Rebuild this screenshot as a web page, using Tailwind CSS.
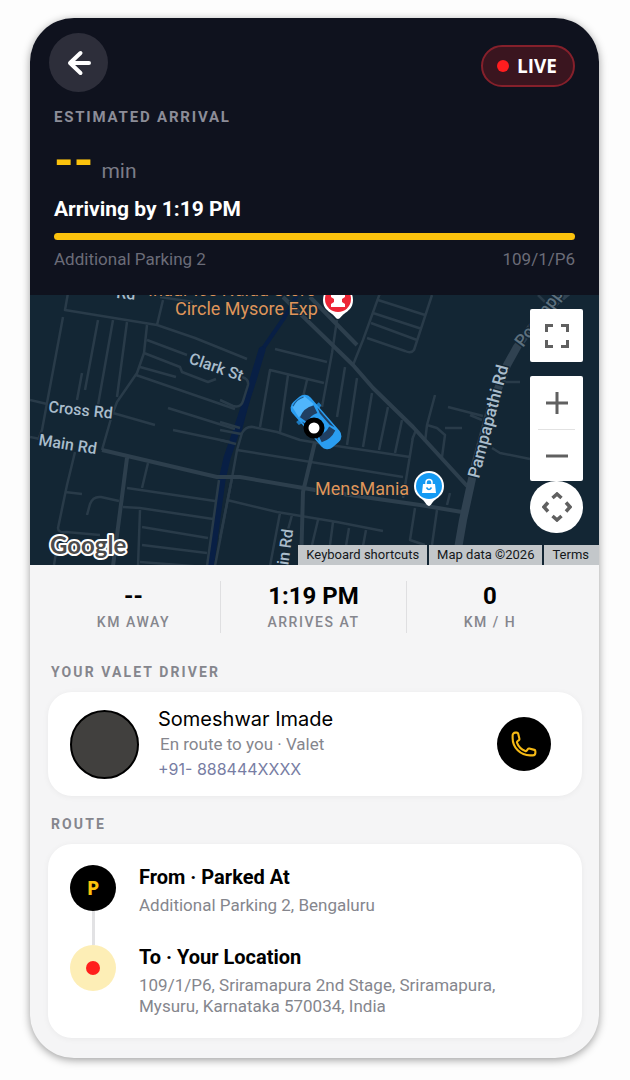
<!DOCTYPE html>
<html lang="en">
<head>
<meta charset="utf-8">
<meta name="viewport" content="width=device-width, initial-scale=1">
<title>Valet tracking</title>
<script src="https://cdn.jsdelivr.net/npm/@tailwindcss/browser@4"></script>
</head>
<body class="min-h-screen bg-[#fdfdfd] pt-[18px] pr-[31px] pb-[22px] pl-[30px] font-['Roboto',sans-serif] text-black">
<main class="overflow-hidden rounded-[44px] bg-[#f5f5f6] shadow-[0_2px_9px_rgba(0,0,0,0.38)]">

  <header class="bg-[#0f121e] pt-[15px] pb-6">
    <div class="flex items-start justify-between pr-6 pl-[19px]">
      <button type="button" aria-label="Back" class="flex size-[59px] items-center justify-center rounded-full bg-[#2d2e3a]">
        <svg class="size-7" viewBox="0 0 28 28" fill="none" stroke="#fff" stroke-width="4" stroke-linecap="round" stroke-linejoin="round"><path d="M15.500 4 5 14l10.500 10M5.500 14H24"/></svg>
      </button>
      <div class="mt-3 flex h-[42px] items-center gap-2 rounded-full border-2 border-[#85202b] bg-[#3a151f] pr-4 pl-[14px] font-['Open_Sans',sans-serif] text-[19px] font-bold text-white">
        <span class="size-3 rounded-full bg-[#ff1d1f]"></span>LIVE
      </div>
    </div>
    <div class="px-6 pt-[13px]">
      <h1 class="text-[15px] leading-6 font-bold tracking-[0.12em] text-[#8c8d98]">ESTIMATED ARRIVAL</h1>
      <p class="flex h-[66px] items-baseline gap-2 text-[50px] leading-[64px] font-bold text-[#fbc20d]">--<span class="text-[21px] font-normal text-[#7b7c88]">min</span></p>
      <p class="text-[21px] leading-7 font-bold text-white">Arriving by 1:19 PM</p>
      <div role="progressbar" aria-label="Trip progress" aria-valuenow="100" class="mt-[10px] h-[7px] rounded-full bg-[#fbc20d]"></div>
      <div class="mt-[7px] flex justify-between text-[17px] leading-6 text-[#6b6c78]"><span>Additional Parking 2</span><span>109/1/P6</span></div>
    </div>
  </header>

  <section aria-label="Map" class="relative h-[270px] overflow-hidden bg-[#132634]">
    <svg class="block h-full w-full" viewBox="30 295 569 270" preserveAspectRatio="xMidYMid slice" font-family="Roboto, sans-serif">
      <!-- River -->
      <g fill="none" stroke="#081f45" stroke-linecap="round" stroke-linejoin="round">
        <path stroke-width="4" d="M300 290 284 318 262 350 253 380 240 430"/>
        <path stroke-width="7" d="M262 350 253 380 240 420 227 458 222 480 210 570"/>
      </g>
      <!-- Side streets -->
      <g fill="none" stroke="#293b49" stroke-width="2.500" stroke-linejoin="round">
        <path d="M68 293 65 310 157 325 195 338 247 359M163 300 157 325M63 317 42 430 38 440M98 320 85 390M113 320 98 405M127 322 117 397M147 325 144 353 137 373 117 402 112 415 102 450M147 340 187 355M144 353 180 367 182 372 208 382 216 379M140 367 176 377M136 375 235 409M168 408 235 429M113 413 155 425M30 400 47 404M82 373 77 400"/>
        <path d="M275 349 327 362M324 383 270 370 260 427M288 375 280 432M307 380 303 397M337 320 332 353 322 407M380 293 363 340 353 365M378 300 425 315M373 313 422 329M371 323 417 340M367 338 405 351Q411 354 414 350L432 295M345 367 337 417M357 378 347 445M372 393 363 447M388 407 379 450M402 420 395 453M220 400 233 406Q241 408 243 401L248 385Q249 379 242 377M220 422 240 428M160 297 193 302"/>
        <path d="M75 452 67 485 58 528Q58 533 66 532L100 535M65 492 82 494M58 540 54 565M148 463 142 488M127 488 215 501M123 507 140 508 213 519M140 510 138 566M142 527 208 538M142 545 207 553M140 562 205 567M119 501 101 497Q93 496 90 504L87 515M173 430 230 442M219 480 207 566M232 478 215 566M30 437 45 440"/>
        <path d="M220 538 232 478 237 450 242 433Q246 426 253 427L277 432 300 440 330 445 410 457M237 450 403 477M220 430 241 434M220 440 236 444M227 500 277 512 337 522 383 531M280 513 270 566M292 515 286 537M318 520 312 545M333 522 330 545M349 528 346 546M366 530 363 546M413 437 403 498M415 508 410 540 425 545M437 510 432 545M416 430 412 440"/>
        <path d="M435 395 427 425 425 442M427 425 437 428 445 435 442 457M445 428H462M448 407 483 416M450 493 447 505M492 448 500 453 530 459M505 382H520M538 295 550 307M482 420 470 415"/>
      </g>
      <g fill="none" stroke="#2d3f4d" stroke-width="4" stroke-linejoin="round">
        <path d="M283 297 353 365 373 388 413 427 468 487M310 297 357 345"/>
        <path d="M102 450 153 462 217 477H240L315 490 420 505 462 512M127 458 113 566M315 442 303 492 301 566"/>
        <path stroke-width="8" stroke="#304251" d="M570 290 540 315 517 347 507 365 490 410 475 465 463 520 455 566"/>
      </g>
      <!-- Street names -->
      <g fill="#a9bccb" stroke="#132634" stroke-width="3" paint-order="stroke" font-size="16" font-weight="500" stroke-linejoin="round">
        <text x="116" y="298" transform="rotate(5 116 298)">Rd</text>
        <text x="188" y="363" transform="rotate(19 188 363)">Clark St</text>
        <text x="48" y="412" transform="rotate(6 48 412)">Cross Rd</text>
        <text x="38" y="445" transform="rotate(9 38 445)">Main Rd</text>
        <text x="285" y="588" transform="rotate(-82 285 588)">Main Rd</text>
        <path id="road-pampapathi" fill="none" stroke="none" d="M479 479Q494 420 511 358"/>
        <text font-size="17"><textPath href="#road-pampapathi">Pampapathi Rd</textPath></text>
        <text x="523" y="348" font-size="17" fill="#5d707e" transform="rotate(-53 523 348)">Poonappa Rd</text>
      </g>
      <!-- Places -->
      <g fill="#df955a" stroke="#132634" stroke-width="2" paint-order="stroke" font-size="18">
        <text x="148" y="296">Indur Ice Naidu Store</text>
        <text x="175" y="315">Circle Mysore Exp</text>
        <text x="315" y="495">MensMania</text>
      </g>
      <path fill="#fff" d="M338 285a15 15 0 0 1 15 15c0 8-5 11-9 14-3 2-4 5-6 5s-3-3-6-5c-4-3-9-6-9-14a15 15 0 0 1 15-15z"/>
      <circle cx="338" cy="299" r="13" fill="#ed2535"/>
      <path fill="#fff" d="M331 294h14v3l-3 2v3l3 2v3h-14v-3l3-2v-3l-3-2z"/>
      <path fill="#fff" d="M429 471a15 15 0 0 1 15 15c0 8-5 11-9 14-3 2-4 6-6 6s-4-4-6-6c-4-3-9-6-9-14a15 15 0 0 1 15-15z"/>
      <circle cx="429" cy="486" r="13" fill="#149af3"/>
      <path fill="#fff" d="M423 484h12l1 9h-14z"/>
      <path fill="none" stroke="#fff" stroke-width="1.500" d="M426 485v-2.500a3 3 0 0 1 6 0v2.500"/>
      <path fill="none" stroke="#149af3" stroke-width="1.500" d="M426.500 487.500q2.500 4 5 0"/>
      <!-- Valet car, nose to the upper left -->
      <g transform="translate(316 422) rotate(49)">
        <path fill="#1d79bd" d="M-13-15h4l1 4h-5zM-13 15h4l1-4h-5z"/>
        <rect x="-30" y="-12" width="60" height="24" rx="8" fill="#2a9df0"/>
        <path fill="#50b5fb" d="M-27-8q-3 8 0 16l12 2v-20z"/>
        <path fill="#203f62" d="M-14-9q-5 9 0 18l8-2q-3-7 0-14z"/>
        <path fill="#203f62" d="M-10-10.500h26l-5 2h-15zM-10 10.500h26l-5-2h-15z"/>
        <path fill="#203f62" d="M12-7q3 7 0 14l7 2q4-9 0-18z"/>
        <path fill="none" stroke="#1b5b91" d="M-27-7q-3 7 0 14"/>
      </g>
      <circle cx="314" cy="428" r="8" fill="#fff" stroke="#000" stroke-width="5"/>
      <text x="50" y="554" font-family="Lato, sans-serif" font-size="24" font-weight="700" fill="#4b4b4b" stroke="#fff" stroke-width="4" stroke-linejoin="round" paint-order="stroke">Google</text>
    </svg>

    <div class="absolute top-[14px] right-4 flex w-[53px] flex-col">
      <button type="button" aria-label="Toggle fullscreen" class="mb-[14px] flex h-[53px] items-center justify-center rounded-xs bg-white">
        <svg class="size-6" viewBox="0 0 24 24" fill="none" stroke="#606060" stroke-width="3"><path d="M1.500 8V1.500H8M16 1.500h6.500V8M22.500 16v6.500H16M8 22.500H1.500V16"/></svg>
      </button>
      <button type="button" aria-label="Zoom in" class="flex h-[53px] items-center justify-center rounded-t-xs bg-white">
        <svg class="size-6" viewBox="0 0 24 24" stroke="#606060" stroke-width="3"><path d="M12 1v22M1 12h22"/></svg>
      </button>
      <div class="bg-white px-2"><div class="h-px bg-[#e2e2e2]"></div></div>
      <button type="button" aria-label="Zoom out" class="flex h-[51px] items-center justify-center rounded-b-xs bg-white">
        <svg class="size-6" viewBox="0 0 24 24" stroke="#606060" stroke-width="3"><path d="M1 12h22"/></svg>
      </button>
      <button type="button" aria-label="Map camera controls" class="flex h-[52px] items-center justify-center rounded-full bg-white">
        <svg class="size-[30px]" viewBox="0 0 30 30" fill="none" stroke="#606060" stroke-width="3.500"><path d="m10.500 6 4.500-4 4.500 4M10.500 24l4.500 4 4.500-4M6 10.500 2 15l4 4.500M24 10.500l4 4.500-4 4.500"/></svg>
      </button>
    </div>

    <div class="absolute right-0 bottom-0 flex gap-0.5 text-[13px] leading-5 text-[#14171a]">
      <button type="button" class="bg-[#c3c7ca] px-2">Keyboard shortcuts</button>
      <span class="bg-[#c3c7ca] px-2">Map data ©2026</span>
      <a href="#terms" class="bg-[#c3c7ca] pr-[10px] pl-2">Terms</a>
    </div>
  </section>

  <section aria-label="Trip figures" class="grid grid-cols-[174fr_186fr_166fr] pt-4 pr-[26px] pl-[17px] text-center">
    <div class="border-r border-[#dfdfe1]">
      <p class="text-2xl leading-[30px] font-bold">--</p>
      <p class="text-sm leading-[22px] font-medium tracking-[0.11em] text-[#85868d]">KM AWAY</p>
    </div>
    <div class="border-r border-[#dfdfe1]">
      <p class="text-2xl leading-[30px] font-bold">1:19 PM</p>
      <p class="text-sm leading-[22px] font-medium tracking-[0.11em] text-[#85868d]">ARRIVES AT</p>
    </div>
    <div>
      <p class="text-2xl leading-[30px] font-bold">0</p>
      <p class="text-sm leading-[22px] font-medium tracking-[0.11em] text-[#85868d]">KM / H</p>
    </div>
  </section>

  <section class="pt-[27px] pr-[17px] pl-[18px]">
    <h2 class="pl-[3px] text-sm leading-6 font-bold tracking-[0.15em] text-[#85868d]">YOUR VALET DRIVER</h2>
    <div class="mt-2 flex items-center gap-[19px] rounded-[24px] bg-white py-[15px] pr-[31px] pl-[22px] shadow-[0_1px_6px_rgba(0,0,0,0.05)]">
      <div class="size-[69px] shrink-0 rounded-full border-2 border-black bg-[#41403e]"></div>
      <div class="min-w-0 flex-1">
        <p class="font-['Inter',sans-serif] text-xl leading-6">Someshwar Imade</p>
        <p class="pl-0.5 text-[17px] leading-[26px] text-[#85868d]">En route to you · Valet</p>
        <a href="tel:+91888444" class="block font-['Inter',sans-serif] text-base leading-6 text-[#777da3]">+91- 888444XXXX</a>
      </div>
      <button type="button" aria-label="Call driver" class="flex size-[54px] items-center justify-center rounded-full bg-black">
        <svg class="size-7" viewBox="0 0 24 24" fill="none" stroke="#f5b915" stroke-width="1.800" stroke-linejoin="round"><path d="M2.250 6.750c0 8.284 6.716 15 15 15h2.250a2.250 2.250 0 0 0 2.250-2.250v-1.372c0-.516-.351-.966-.852-1.091l-4.423-1.106c-.44-.11-.902.055-1.173.417l-.97 1.293c-.282.376-.769.542-1.210.38a12.035 12.035 0 0 1-7.143-7.143c-.162-.441.004-.928.380-1.210l1.293-.970c.363-.271.527-.734.417-1.173L6.963 3.102a1.125 1.125 0 0 0-1.091-.852H4.500A2.250 2.250 0 0 0 2.250 4.500v2.250z"/></svg>
      </button>
    </div>
  </section>

  <section class="pt-4 pr-[17px] pb-5 pl-[18px]">
    <h2 class="pl-[3px] text-sm leading-6 font-bold tracking-[0.15em] text-[#85868d]">ROUTE</h2>
    <ol class="mt-2 rounded-[24px] bg-white px-[22px] pt-[21px] pb-[21px] shadow-[0_1px_6px_rgba(0,0,0,0.05)]">
      <li class="flex gap-[23px]">
        <div class="flex flex-col items-center">
          <span class="flex size-[46px] items-center justify-center rounded-full bg-black font-['Open_Sans',sans-serif] text-xl font-bold text-[#fbc20d]">P</span>
          <span class="h-[34px] w-[3px] bg-[#e2e2e4]"></span>
        </div>
        <div>
          <h3 class="text-xl leading-6 font-bold">From · Parked At</h3>
          <p class="mt-[6px] text-[17px] leading-[21px] text-[#85868d]">Additional Parking 2, Bengaluru</p>
        </div>
      </li>
      <li class="flex gap-[23px]">
        <span class="flex size-[46px] shrink-0 items-center justify-center rounded-full bg-[#fdeeb6]"><span class="size-[14px] rounded-full bg-[#ff1f1c]"></span></span>
        <div>
          <h3 class="text-xl leading-6 font-bold">To · Your Location</h3>
          <p class="mt-[6px] text-[17px] leading-[21px] text-[#85868d]">109/1/P6, Sriramapura 2nd Stage, Sriramapura,<br>Mysuru, Karnataka 570034, India</p>
        </div>
      </li>
    </ol>
  </section>
</main>
</body>
</html>
